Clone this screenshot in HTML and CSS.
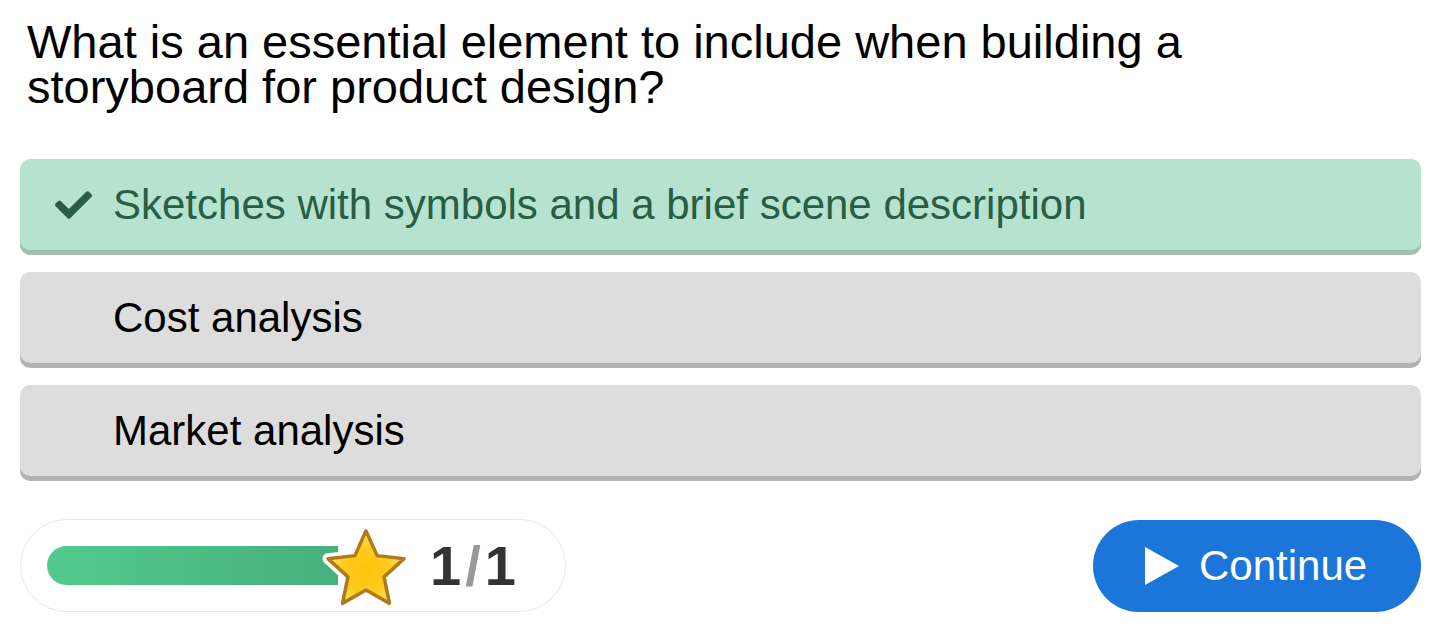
FILE: index.html
```html
<!DOCTYPE html>
<html lang="en">
<head>
    <meta charset="UTF-8">
    <meta name="viewport" content="width=device-width, initial-scale=1.0">
    <title>Storyboard Quiz</title>
    <link rel="stylesheet" href="styles.css">
</head>
<body>
    <div class="quiz">
        <!-- Question -->
        <h1 class="question">What is an essential element to include when building a storyboard for product design?</h1>

        <!-- Answers -->
        <div class="answers">
            <div class="answer correct">
                <svg class="check" viewBox="0 65 512 382" width="37" height="28">
                    <path fill="currentColor" d="M173.898 439.404l-166.4-166.4c-9.997-9.997-9.997-26.206 0-36.204l36.203-36.204c9.997-9.998 26.207-9.998 36.204 0L192 312.69 432.095 72.596c9.997-9.997 26.207-9.997 36.204 0l36.203 36.204c9.997 9.997 9.997 26.206 0 36.204l-294.4 294.401c-9.998 9.997-26.207 9.997-36.204-.001z"/>
                </svg>
                <span>Sketches with symbols and a brief scene description</span>
            </div>
            <div class="answer">
                <span>Cost analysis</span>
            </div>
            <div class="answer">
                <span>Market analysis</span>
            </div>
        </div>

        <!-- Progress and continue -->
        <div class="footer">
            <div class="progress">
                <div class="bar"></div>
                <svg class="star" viewBox="0 0 96 90" width="96" height="90">
                    <defs>
                        <radialGradient id="starFill" cx="50%" cy="55%" r="55%">
                            <stop offset="0" stop-color="#ffc20a"/>
                            <stop offset="0.55" stop-color="#ffcb1c"/>
                            <stop offset="1" stop-color="#ffe873"/>
                        </radialGradient>
                    </defs>
                    <path d="M48 8 L59.17 32.63 L86.04 35.64 L66.07 53.87 L71.51 80.36 L48 67 L24.49 80.36 L29.93 53.87 L9.96 35.64 L36.83 32.63 Z" fill="#fff" stroke="#fff" stroke-width="11" stroke-linejoin="round"/>
                    <path d="M48 8 L59.17 32.63 L86.04 35.64 L66.07 53.87 L71.51 80.36 L48 67 L24.49 80.36 L29.93 53.87 L9.96 35.64 L36.83 32.63 Z" fill="url(#starFill)" stroke="#b07a1c" stroke-width="3.5" stroke-linejoin="round"/>
                </svg>
                <div class="count">1<span class="slash">/</span>1</div>
            </div>
            <button class="continue-btn">
                <svg class="play" viewBox="0 0 34 38" width="34" height="38">
                    <path fill="#fff" d="M0 0 L34 19 L0 38 Z"/>
                </svg>
                <span>Continue</span>
            </button>
        </div>
    </div>
</body>
</html>
```

FILE: styles.css
```css
/* Quiz page */
body {
    font-family: "Liberation Sans", Arial, sans-serif;
    margin: 0;
    padding: 0;
    background-color: #fff;
}
.quiz {
    padding: 19px 22px 0 20px;
}
.question {
    font-size: 47px;
    font-weight: normal;
    line-height: 45px;
    color: #000;
    margin: 0 0 50px 7px;
    max-width: 1200px;
}
.answers {
    display: flex;
    flex-direction: column;
    gap: 22px;
}
.answer {
    display: flex;
    align-items: center;
    height: 91px;
    padding-left: 93px;
    border-radius: 10px;
    background-color: #dddddd;
    box-shadow: 0 5px 0 #b3b3b3;
    font-size: 42px;
    color: #000;
}
.answer.correct {
    padding-left: 35px;
    background-color: #b5e3cf;
    box-shadow: 0 5px 0 #a3bfb0;
    color: #285e43;
}
.check {
    margin-right: 21px;
}
.footer {
    display: flex;
    justify-content: space-between;
    align-items: center;
    margin-top: 43px;
}
.progress {
    display: flex;
    align-items: center;
    width: 518px;
    height: 91px;
    padding-left: 26px;
    border: 1px solid #e8e8e8;
    border-radius: 47px;
}
.bar {
    width: 291px;
    height: 39px;
    border-radius: 20px 0 0 20px;
    background: linear-gradient(to right, #52ca8d, #47b07e);
}
.star {
    margin-left: -20px;
    margin-top: 4px;
}
.count {
    margin-left: 16px;
    font-size: 56px;
    font-weight: bold;
    color: #333;
}
.slash {
    color: #999;
    margin: 0 4px;
}
.continue-btn {
    display: flex;
    align-items: center;
    gap: 20px;
    width: 328px;
    height: 92px;
    padding: 0 0 0 52px;
    border: none;
    border-radius: 46px;
    background-color: #1c75d9;
    color: #fff;
    font-family: "Liberation Sans", Arial, sans-serif;
    font-size: 42px;
    cursor: pointer;
}
```
